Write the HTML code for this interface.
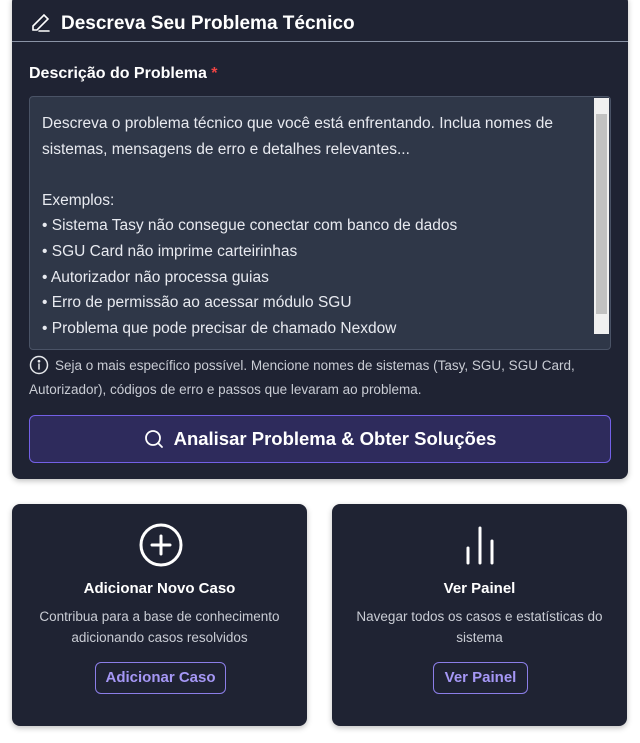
<!DOCTYPE html>
<html><head><meta charset="utf-8"><style>
*{box-sizing:border-box;margin:0;padding:0}
body{width:640px;height:743px;background:#fff;font-family:"Liberation Sans",sans-serif;color:#fff;position:relative;overflow:hidden}
.card{position:absolute;background:#1f2333;border-radius:8px;box-shadow:0 2px 6px rgba(0,0,0,.25)}
.main{left:12px;top:-6px;width:616px;height:485px}
.hd{position:absolute;left:0;top:6px;width:616px;height:42px;border-bottom:1px solid #8a93a6}
.hd span{position:absolute;left:49px;top:6px;font-size:19px;font-weight:bold}
.lbl{position:absolute;left:17px;top:71px;font-size:16px;font-weight:bold}
.lbl i{color:#ef4444;font-style:normal}
.ta{position:absolute;left:17px;top:102px;width:582px;height:254px;background:#2f3748;border:1px solid #4a5366;border-radius:4px;padding:14px 12px;font-size:15.5px;line-height:25.6px;color:#e8eaf0}
.sb{position:absolute;right:1px;top:1px;width:15px;height:236px;background:#f0f0f0}
.sb b{position:absolute;left:2px;top:16px;width:11px;height:200px;background:#c1c1c1}
.info{position:absolute;left:17px;top:360px;width:580px;font-size:13.5px;line-height:24px;color:#c9ccd4}
.btn{position:absolute;left:17px;top:421px;width:582px;height:48px;background:#2e2b5c;border:1px solid #7360e6;border-radius:6px;font-size:18.5px;font-weight:bold;text-align:center;line-height:46px}
.sm{top:504px;width:295px;height:222px;text-align:center}
.sm h3{position:absolute;top:76px;width:100%;font-size:15px}
.sm p{position:absolute;top:102px;left:8px;right:8px;font-size:13.5px;line-height:21px;color:#c9ccd4}
.sm a{position:absolute;top:158px;height:32px;border:1px solid #8b7ee8;border-radius:6px;color:#a597f5;font-size:15px;font-weight:bold;line-height:30px}
</style></head><body>
<div class="card main">
 <div class="hd">
  <svg style="position:absolute;left:18px;top:12px" width="22" height="22" viewBox="0 0 22 22" fill="none" stroke="#fff" stroke-width="1.6" stroke-linecap="round"><path d="M3 18 L3 14 L14 3 L18 7 L7 18 Z"/><path d="M9 19 H19"/></svg>
  <span style="top:13px">Descreva Seu Problema Técnico</span>
 </div>
 <div class="lbl">Descrição do Problema <i>*</i></div>
 <div class="ta">Descreva o problema técnico que você está enfrentando. Inclua nomes de sistemas, mensagens de erro e detalhes relevantes...<br><br>Exemplos:<br>• Sistema Tasy não consegue conectar com banco de dados<br>• SGU Card não imprime carteirinhas<br>• Autorizador não processa guias<br>• Erro de permissão ao acessar módulo SGU<br>• Problema que pode precisar de chamado Nexdow<div class="sb"><b></b></div></div>
 <div class="info"><svg style="vertical-align:-5px;margin-right:6px" width="20" height="20" viewBox="0 0 20 20" fill="none" stroke="#e5e7eb" stroke-width="1.5"><circle cx="10" cy="10" r="8.5"/><path d="M10 9v5" stroke-linecap="round"/><circle cx="10" cy="6.2" r=".6" fill="#e5e7eb"/></svg>Seja o mais específico possível. Mencione nomes de sistemas (Tasy, SGU, SGU Card, Autorizador), códigos de erro e passos que levaram ao problema.</div>
 <div class="btn"><svg style="vertical-align:-4px;margin-right:10px" width="20" height="20" viewBox="0 0 20 20" fill="none" stroke="#fff" stroke-width="1.8" stroke-linecap="round"><circle cx="9" cy="9" r="7"/><path d="M14 14l4 4"/></svg>Analisar Problema &amp; Obter Soluções</div>
</div>
<div class="card sm" style="left:12px">
 <svg style="position:absolute;left:126px;top:18px" width="46" height="46" viewBox="0 0 46 46" fill="none" stroke="#fff" stroke-width="3" stroke-linecap="round"><circle cx="23" cy="23" r="20"/><path d="M23 14v18M14 23h18"/></svg>
 <h3>Adicionar Novo Caso</h3>
 <p>Contribua para a base de conhecimento adicionando casos resolvidos</p>
 <a style="left:83px;width:131px">Adicionar Caso</a>
</div>
<div class="card sm" style="left:332px">
 <svg style="position:absolute;left:128px;top:14px" width="40" height="48" viewBox="0 0 40 48" fill="none" stroke="#fff" stroke-width="3" stroke-linecap="round"><path d="M8 30v15M20 10v35M32 23v22"/></svg>
 <h3>Ver Painel</h3>
 <p>Navegar todos os casos e estatísticas do sistema</p>
 <a style="left:101px;width:95px">Ver Painel</a>
</div>
</body></html>
